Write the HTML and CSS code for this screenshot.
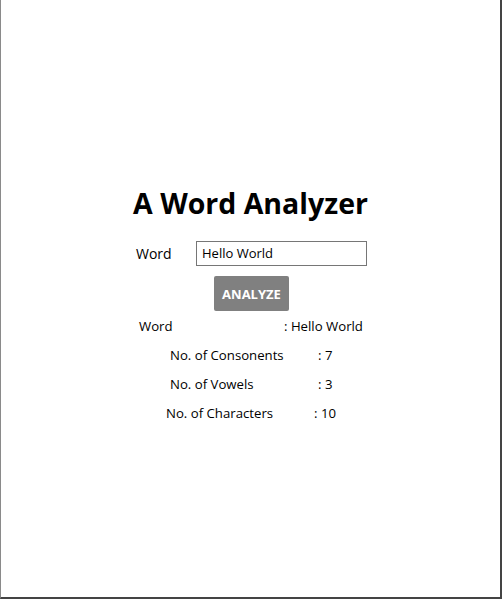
FILE: index.html
```html
<!DOCTYPE html>
<html>
<head>
<meta charset="utf-8">
<link rel="stylesheet" href="styles.css">
</head>
<body>
<div class="frame">
  <h1 class="title">A Word Analyzer</h1>
  <div class="form-row">
    <label class="form-label" for="word">Word</label>
    <input class="word-input" id="word" type="text" value="Hello World">
  </div>
  <button class="analyze-btn">ANALYZE</button>
  <div class="results">
    <div class="result-row row-word"><span class="res-label">Word</span><span class="res-value">: Hello World</span></div>
    <div class="result-row row-cons"><span class="res-label">No. of Consonents</span><span class="res-value">: 7</span></div>
    <div class="result-row row-vow"><span class="res-label">No. of Vowels</span><span class="res-value">: 3</span></div>
    <div class="result-row row-char"><span class="res-label">No. of Characters</span><span class="res-value">: 10</span></div>
  </div>
</div>
</body>
</html>
```
FILE: styles.css
```css
html, body {
  margin: 0;
  padding: 0;
  background: #fff;
}
body {
  font-family: "Open Sans", "Noto Sans", sans-serif;
  color: #000;
}
.frame {
  box-sizing: border-box;
  width: 502px;
  height: 599px;
  border-left: 1px solid #8a8a8a;
  border-right: 2px solid #444;
  border-bottom: 2px solid #444;
  padding-top: 181px;
}
.title {
  margin: 0;
  text-align: center;
  font-size: 28.5px;
  font-weight: 700;
  line-height: 44px;
}
.form-row {
  display: flex;
  align-items: center;
  margin-top: 15px;
  padding-left: 135px;
  height: 26px;
}
.form-label {
  font-size: 14px;
  width: 60px;
}
.word-input {
  box-sizing: border-box;
  width: 171px;
  height: 25px;
  border: 1px solid #767676;
  padding: 0 5px;
  font-family: inherit;
  font-size: 13px;
  color: #000;
  outline: none;
}
.analyze-btn {
  display: block;
  margin: 10px 0 0 213px;
  width: 75px;
  height: 35px;
  border: none;
  border-radius: 2px;
  background: #808080;
  color: #fff;
  font-family: inherit;
  font-weight: 700;
  font-size: 13px;
  padding: 0;
}
.results {
  margin-top: 0;
  font-size: 13.2px;
}
.result-row {
  display: flex;
  height: 29px;
  align-items: center;
}
.res-label { display: block; }
.row-word { padding-left: 138px; }
.row-word .res-label { width: 145px; }
.row-cons, .row-vow { padding-left: 169px; }
.row-cons .res-label, .row-vow .res-label { width: 148px; }
.row-char { padding-left: 165px; }
.row-char .res-label { width: 148px; }
```
